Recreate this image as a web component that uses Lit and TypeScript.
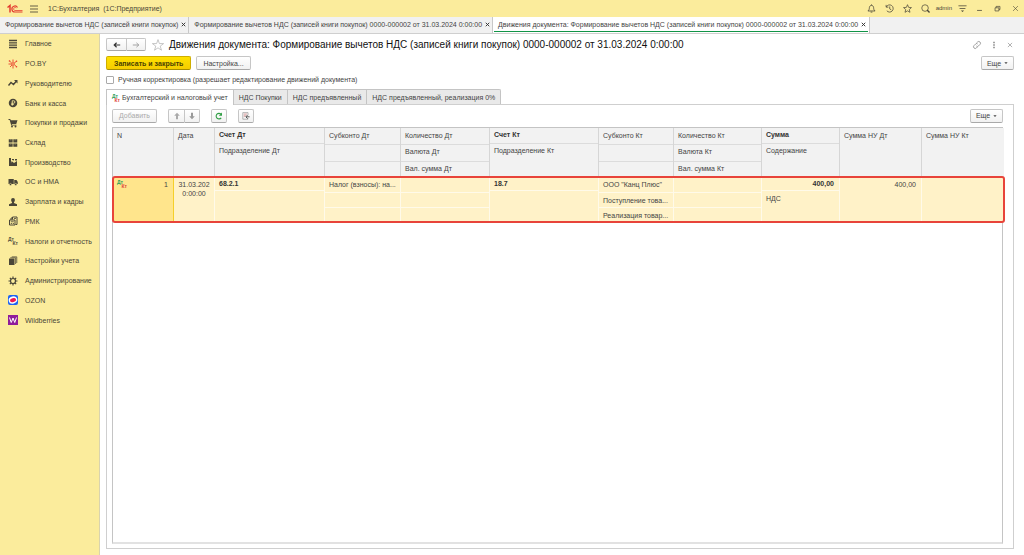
import { LitElement, html, css, svg, nothing, TemplateResult } from "lit";
import { customElement, property, state } from "lit/decorators.js";
import { classMap } from "lit/directives/class-map.js";

const icons: Record<string, TemplateResult> = {
  main: svg`<path d="M2 3h16M2 7.700h16M2 12.300h16M2 17h16" stroke="currentColor" stroke-width="2.600"/>`,
  poby: svg`<g stroke="#e8432e" stroke-width="1.8" fill="none"><circle cx="10" cy="10" r="2.5"/><path d="M10 7V1M10 13v6M12 8.500l5-4M12.500 11.500l5 4M7.500 10H1M7.500 8L3 4M8 12l-4 4"/></g><g fill="#e8432e"><circle cx="17" cy="4.500" r="1.600"/><circle cx="3" cy="4" r="1.600"/><circle cx="17" cy="15.500" r="1.600"/></g>`,
  chart: svg`<path d="M1 15l5-6 5 4 6-7" fill="none" stroke="currentColor" stroke-width="2.800"/><path d="M12 4h7v7z" fill="currentColor"/>`,
  bank: svg`<circle cx="10" cy="10" r="8.500" fill="currentColor"/><path d="M8.500 15.500V5.500h2.800a2.500 2.500 0 0 1 0 5H6.500M6.500 13h5" fill="none" stroke="#fbed9e" stroke-width="1.700"/>`,
  cart: svg`<path d="M1 2h3.500l1 2.500H19l-2.500 7.500H7.500l.5 1.500h9v1.500H6.500L3.300 3.800H1z" fill="currentColor"/><circle cx="8" cy="17" r="1.900" fill="currentColor"/><circle cx="15" cy="17" r="1.900" fill="currentColor"/>`,
  stock: svg`<path d="M1.500 2.500h7.800V9H1.500zM10.700 2.500h7.800V9h-7.800zM1.500 11h7.800v6.500H1.500zM10.700 11h7.800v6.500h-7.800z" fill="currentColor"/><path d="M4.500 2.500v2h2v-2M13.300 2.500v2h2v-2M4.500 11v2h2v-2M13.300 11v2h2v-2" fill="#a89f72"/>`,
  factory: svg`<path d="M2 18V8l5 3V8l5 4 6-4v10z" fill="currentColor"/><path d="M2 2h4v8H2zM8 4h4v3l-4-1zM14 4h4v3h-4z" fill="currentColor"/>`,
  truck: svg`<path d="M1 4h10.500v10H1zM12.500 6H17l2.500 4v4h-7z" fill="currentColor"/><circle cx="5" cy="15" r="2.200" fill="currentColor" stroke="#fbed9e"/><circle cx="15.500" cy="15" r="2.200" fill="currentColor" stroke="#fbed9e"/>`,
  person: svg`<path d="M10 2a3.800 3.800 0 0 1 3.800 4c0 2-.8 3.500-1.800 4.300V12l6 2.500V18H2v-3.500L8 12v-1.700C7 9.500 6.200 8 6.200 6A3.800 3.800 0 0 1 10 2z" fill="currentColor"/>`,
  rmk: svg`<path d="M9 7V2h9v15h-3M3 8h11v10H3zM6 8V4h3" fill="none" stroke="currentColor" stroke-width="2"/><path d="M5.500 11.500h6M5.500 15h2.500M9.500 15H12M12 5h4" stroke="currentColor" stroke-width="1.600"/>`,
  books: svg`<path d="M2 5h11v13H2z" fill="currentColor"/><path d="M4.500 3.500h10.700V16M7.500 1.700h10V14" fill="none" stroke="currentColor" stroke-width="1.500"/>`,
  gear: svg`<circle cx="10" cy="10" r="5" fill="none" stroke="currentColor" stroke-width="2.400"/><path d="M10 1v4M10 15v4M1 10h4M15 10h4M3.700 3.700l2.800 2.800M13.500 13.500l2.800 2.800M16.300 3.700l-2.800 2.800M6.500 13.500l-2.800 2.800" stroke="currentColor" stroke-width="2.400"/>`,
  ozon: svg`<rect width="20" height="20" rx="4" fill="#1d63f2"/><ellipse cx="10" cy="10" rx="8.700" ry="7" transform="rotate(-15 10 10)" fill="#fff"/><ellipse cx="10" cy="10.300" rx="6" ry="4" transform="rotate(-15 10 10)" fill="#f0164f"/>`,
  wb: svg`<rect width="20" height="20" fill="#8f1d9b"/><path d="M3 5l3.500 10L10 6l3.500 9L17 5" fill="none" stroke="#fff" stroke-width="2"/>`,
  menu: svg`<path d="M2 4h16M2 10h16M2 16h16" stroke="currentColor" stroke-width="1.700"/>`,
  bell: svg`<path d="M2 15.500c3-2.500 3-4 3.300-7.500C5.600 5 7.500 3 10 3s4.400 2 4.700 5c.3 3.500.3 5 3.300 7.500zM10 3V1M8 18h4" fill="none" stroke="currentColor" stroke-width="1.800"/>`,
  history: svg`<path d="M3 6.500A8 8 0 1 1 4 15M2.500 2v5h5M10.500 5.500V11l3.500 2" fill="none" stroke="currentColor" stroke-width="1.700"/>`,
  star: svg`<path d="M10 1.500l2.500 6 6.300.5-4.800 4.200 1.500 6.300L10 15.200l-5.500 3.300L6 12.200 1.200 8l6.300-.5z" fill="none" stroke="currentColor" stroke-width="1.600" stroke-linejoin="round"/>`,
  starThin: svg`<path d="M10 1l2.300 6.600 7 .1-5.600 4.200 2.100 6.800L10 14.700l-5.800 4 2.100-6.800L.700 7.700l7-.1z" fill="none" stroke="currentColor" stroke-width="1.100"/>`,
  search: svg`<circle cx="9" cy="9" r="7.300" fill="none" stroke="currentColor" stroke-width="1.600"/><path d="M13.500 13.500l5.500 5.500" stroke="currentColor" stroke-width="3"/>`,
  filter: svg`<path d="M1 4h18M3.500 10h13" stroke="currentColor" stroke-width="1.700"/><path d="M6.500 14.500h7L10 18z" fill="currentColor"/>`,
  minimize: svg`<path d="M3 15.500h14" stroke="currentColor" stroke-width="2.200"/>`,
  restore: svg`<path d="M3 8h11v9H3zM6 8V4h11v9h-3" fill="none" stroke="currentColor" stroke-width="2"/>`,
  close: svg`<path d="M3 3l14 14M17 3L3 17" stroke="currentColor" stroke-width="1.700"/>`,
  closeBold: svg`<path d="M3 3l14 14M17 3L3 17" stroke="currentColor" stroke-width="3.800"/>`,
  link: svg`<path d="M8.500 5.500l3-3a4 4 0 0 1 6 6l-4 4a3.500 3.500 0 0 1-5 0M11.500 14.500l-3 3a4 4 0 0 1-6-6l4-4a3.500 3.500 0 0 1 5 0" fill="none" stroke="currentColor" stroke-width="1.500"/>`,
  dots: svg`<path d="M10 2v3.500M10 8.300v3.500M10 14.500V18" stroke="currentColor" stroke-width="3"/>`,
  back: svg`<path d="M2 10h16M9 4.500L3 10l6 5.500" fill="none" stroke="currentColor" stroke-width="2.900"/>`,
  forward: svg`<path d="M2 10h15M11 4.500l6 5.500-6 5.500" fill="none" stroke="currentColor" stroke-width="2.200"/>`,
  up: svg`<path d="M10 2l7 7.500h-4.500V18h-5V9.500H3z" fill="currentColor"/>`,
  down: svg`<path d="M10 18l7-7.500h-4.500V2h-5v8.500H3z" fill="currentColor"/>`,
  refresh: svg`<path d="M15.500 14.500A7 7 0 1 1 15 5.500" fill="none" stroke="#2f9e44" stroke-width="2.800"/><path d="M17.500 1.500v8h-8z" fill="#2f9e44"/>`,
  report: svg`<path d="M2 1.500h13V8M2 1.500v16.500h13V16" fill="none" stroke="#888" stroke-width="1.500"/><path d="M4.500 5h8M4.500 8h6M4.500 11h3" stroke="#c77" stroke-width="1.500"/><path d="M19 12h-9M14 7.500L9.500 12l4.500 4.500" fill="none" stroke="#444" stroke-width="2.200"/>`,
  caret: svg`<path d="M2 6h16l-8 9z" fill="currentColor"/>`,
};

@customElement("ui-icon")
class UiIcon extends LitElement {
  static styles = css`
    :host { display: inline-flex; flex: none; width: 10px; height: 10px; }
    svg { width: 100%; height: 100%; overflow: visible; }
  `;
  @property() name = "";
  render() {
    return html`<svg viewBox="0 0 20 20" aria-hidden="true">${icons[this.name] ?? nothing}</svg>`;
  }
}

/* Two-letter debit/credit mark, set as small offset captions. */
@customElement("debit-credit")
class DebitCredit extends LitElement {
  static styles = css`
    :host { display: inline-flex; flex-direction: column; flex: none; width: 10px; font: bold 5px/4px "Liberation Sans", Arial, sans-serif; color: #2f9e5b; }
    :host([plain]) { color: #55503f; }
    .credit { align-self: flex-end; color: #e0463c; }
    :host([plain]) .credit { color: inherit; }
  `;
  render() {
    return html`<span>Дт</span><span class="credit">Кт</span>`;
  }
}

interface Part { text: string; bold?: boolean; right?: boolean }
interface Column { width: number; head: Part[]; body: Part[] }

const t = (text = "", bold = false, right = false): Part => ({ text, bold, right });

const columns: Column[] = [
  { width: 61, head: [t("N")], body: [t("1", false, true)] },
  { width: 41, head: [t("Дата")], body: [t("31.03.202 0:00:00")] },
  { width: 110, head: [t("Счет Дт", true), t("Подразделение Дт")], body: [t("68.2.1", true), t()] },
  { width: 76, head: [t("Субконто Дт"), t(), t()], body: [t("Налог (взносы): на..."), t(), t()] },
  { width: 89, head: [t("Количество Дт"), t("Валюта Дт"), t("Вал. сумма Дт")], body: [t(), t(), t()] },
  { width: 109, head: [t("Счет Кт", true), t("Подразделение Кт")], body: [t("18.7", true), t()] },
  { width: 75, head: [t("Субконто Кт"), t(), t()], body: [t('ООО "Канц Плюс"'), t("Поступление това..."), t("Реализация товар...")] },
  { width: 88, head: [t("Количество Кт"), t("Валюта Кт"), t("Вал. сумма Кт")], body: [t(), t(), t()] },
  { width: 78, head: [t("Сумма", true), t("Содержание")], body: [t("400,00", true, true), t("НДС")] },
  { width: 82, head: [t("Сумма НУ Дт")], body: [t("400,00", false, true)] },
  { width: 82, head: [t("Сумма НУ Кт")], body: [t()] },
];

@customElement("postings-table")
class PostingsTable extends LitElement {
  static styles = css`
    :host { display: block; flex: 1; border: 1px solid #c4c4c4; border-bottom: 2px solid #e2e2e2; background: #fff; }
    table { width: 100%; table-layout: fixed; border-collapse: separate; border-spacing: 0; font-size: 7px; line-height: 9px; color: #444; }
    th, td { padding: 0; vertical-align: top; text-align: left; font-weight: normal; }
    th { background: #f2f2f2; border-right: 1px solid #d6d6d6; }
    td { background: #fff2c8; border-right: 1px solid #fffae9; }
    th:last-child, td:last-child { border-right: 0; }
    .stack { display: grid; }
    thead .stack { height: 49px; }
    tbody .stack { height: 45px; }
    thead .two { grid-template-rows: 15px 1fr; }
    thead .three { grid-template-rows: 16px 17px 1fr; }
    tbody .two { grid-template-rows: 13px 1fr; }
    tbody .three { grid-template-rows: 15px 15px 1fr; }
    .part { padding: 3px 2px 0 4px; white-space: nowrap; box-sizing: border-box; }
    .right { text-align: right; padding-right: 5px; }
    thead .part + .part { border-top: 1px solid #dcdcdc; padding-top: 2px; }
    tbody .part + .part { border-top: 1px solid #fffae9; padding-top: 3px; }
    .bold { font-weight: bold; padding-top: 2px; color: #333; }
    .date { white-space: normal; text-align: center; padding: 3px 4px 0; }
    .number { background: #ffe58c; border-right-color: #f5cf2a; }
    .number .stack { display: flex; }
    .number debit-credit { padding: 3px 0 0 4px; }
    .number .part { flex: 1; }
    tbody tr { outline: 2px solid #e8443a; outline-offset: -1px; border-radius: 2px; }
  `;
  private parts(list: Part[], date: boolean) {
    return list.map(
      (p) => html`<div class=${classMap({ part: true, bold: !!p.bold, right: !!p.right, date })}>${p.text}</div>`,
    );
  }
  render() {
    const kind = ["", "one", "two", "three"];
    return html`
      <table>
        <colgroup>${columns.map((c) => html`<col width=${c.width} />`)}</colgroup>
        <thead>
          <tr>${columns.map((c) => html`<th scope="col"><div class="stack ${kind[c.head.length]}">${this.parts(c.head, false)}</div></th>`)}</tr>
        </thead>
        <tbody>
          <tr>
            ${columns.map(
              (c, i) => html`<td class=${i === 0 ? "number" : ""}>
                <div class="stack ${kind[c.body.length]}">
                  ${i === 0 ? html`<debit-credit></debit-credit>` : nothing}${this.parts(c.body, i === 1)}
                </div>
              </td>`,
            )}
          </tr>
        </tbody>
      </table>
    `;
  }
}

const sections: [string, string][] = [
  ["main", "Главное"],
  ["poby", "PO.BY"],
  ["chart", "Руководителю"],
  ["bank", "Банк и касса"],
  ["cart", "Покупки и продажи"],
  ["stock", "Склад"],
  ["factory", "Производство"],
  ["truck", "ОС и НМА"],
  ["person", "Зарплата и кадры"],
  ["rmk", "РМК"],
  ["dtkt", "Налоги и отчетность"],
  ["books", "Настройки учета"],
  ["gear", "Администрирование"],
  ["ozon", "OZON"],
  ["wb", "Wildberries"],
];

const documentName = "Формирование вычетов НДС (записей книги покупок)";
const title = `Движения документа: ${documentName} 0000-000002 от 31.03.2024 0:00:00`;
const windows = [documentName, `${documentName} 0000-000002 от 31.03.2024 0:00:00`, title];
const registers = ["Бухгалтерский и налоговый учет", "НДС Покупки", "НДС предъявленный", "НДС предъявленный, реализация 0%"];

@customElement("app-root")
class AppRoot extends LitElement {
  static styles = css`
    :host { display: flex; flex-direction: column; min-height: 100vh; background: #fff; color: #444; font: 7px/9px "Liberation Sans", Arial, sans-serif; }
    * { box-sizing: border-box; }
    button { font: inherit; color: inherit; margin: 0; padding: 0; border: 0; background: none; display: inline-flex; align-items: center; justify-content: center; white-space: nowrap; }
    a { color: inherit; text-decoration: none; }

    .topbar { display: flex; align-items: center; height: 17px; padding: 0 5px 0 7px; background: #fbec9c; color: #4a4638; }
    .logo { width: 16px; height: 10px; margin-right: 6px; }
    .product { margin-left: 9px; flex: 1; white-space: pre; }
    .tools { display: flex; align-items: center; gap: 9px; }
    .tools ui-icon { width: 9px; height: 9px; }
    .window { display: flex; gap: 11px; }
    .window ui-icon { width: 7px; height: 7px; }
    .user { font-size: 6px; margin: 0 -3px; }

    .windows { display: flex; height: 17px; background: #f1f1f1; border-bottom: 1px solid #cfcfcf; }
    .open { padding: 0 2px 0 5px; border-right: 1px solid #c8c8c8; white-space: nowrap; }
    .open ui-icon { width: 5px; height: 5px; color: #333; }
    .current { background: #fff; padding: 0 1px; }
    .current .inner { padding: 0 2px 0 4px; border-bottom: 1px solid #119447; }
    .inner { display: flex; align-items: center; gap: 3px; height: 15px; }

    .body { flex: 1; display: flex; }
    .sidebar { width: 100px; flex: none; background: #fbec9c; border-right: 1px solid #d9d3ae; color: #4a4638; }
    .sections { display: grid; grid-auto-rows: 1fr; height: 296px; margin: 0; padding: 0; list-style: none; }
    .section { display: flex; align-items: center; gap: 7px; height: 100%; padding-left: 8px; white-space: nowrap; }

    .page { flex: 1; min-width: 0; display: flex; flex-direction: column; padding: 3px 10px 6px 6px; }
    .heading { display: flex; align-items: center; height: 15px; }
    .travel, .pair { display: flex; }
    .travel button { width: 20px; height: 13px; }
    .travel ui-icon { width: 8px; height: 8px; }
    .travel button, .pair button, .button { border: 1px solid #c6c6c6; border-bottom-color: #a9a9a9; background: linear-gradient(#fff, #f1f1f1); border-radius: 2px; }
    .travel button:first-child, .pair button:first-child { border-radius: 2px 0 0 2px; border-right-width: 0; color: #333; }
    .travel button:last-child, .pair button:last-child { border-radius: 0 2px 2px 0; color: #999; }
    .favorite { margin: 0 5px 0 6px; color: #aaa; }
    .favorite ui-icon { width: 12px; height: 12px; }
    h1 { flex: 1; margin: 0; font-size: 10px; line-height: 13px; font-weight: normal; color: #111; white-space: nowrap; }
    .actions { display: flex; align-items: center; gap: 9px; padding-right: 1px; color: #666; }
    .actions ui-icon { width: 8px; height: 8px; }
    .actions .small { width: 6px; height: 6px; }

    .commands { display: flex; gap: 5px; margin-top: 4px; height: 14px; }
    .commands .button { height: 14px; padding: 0 6px; }
    .commands .primary { padding: 0 7px; border-color: #cfae00; border-bottom-color: #a78d00; background: linear-gradient(#ffe100, #f5cd00); font-weight: bold; color: #4a4200; }
    .commands .more, .toolbar .more { margin-left: auto; width: 33px; padding: 0; gap: 3px; }
    .more ui-icon, .toolbar .more ui-icon { width: 4px; height: 4px; }

    .manual { display: flex; align-items: center; gap: 4px; height: 9px; margin: 5px 0; }
    .manual input { appearance: none; width: 8px; height: 8px; margin: 0; border: 1px solid #aaa; border-radius: 1px; background: #fff; }
    .manual input:checked { background: #119447; }

    .registers { display: flex; height: 15px; }
    .register { height: 15px; padding: 0 5px; border: 1px solid #c4c4c4; border-width: 1px 1px 0 0; background: #e9e9e9; }
    .register:first-child { border-left-width: 1px; }
    .register:last-child { border-top-right-radius: 2px; }
    .register.selected { height: 16px; z-index: 1; background: #fff; }
    .register:first-child { gap: 2px; padding: 0 5px 0 3px; }
    .panel { flex: 1; display: flex; flex-direction: column; border: 1px solid #cfcfcf; padding: 3px 10px 4px 5px; }
    .toolbar { display: flex; align-items: center; height: 15px; gap: 11px; margin-bottom: 4px; }
    .toolbar .button { height: 14px; }
    .toolbar .add { width: 45px; color: #aaa; }
    .toolbar .square { width: 16px; }
    .toolbar ui-icon { width: 8px; height: 8px; }
    .pair button { width: 16px; height: 14px; }
    .pair button:first-child { color: #aaa; }
  `;

  @state() private selected = 0;

  render() {
    return html`
      <header class="topbar">
        <svg class="logo" viewBox="0 0 32 20" role="img" aria-label="1С">
          <path d="M1 7l5-4v14" fill="none" stroke="#e33b2e" stroke-width="3" />
          <path d="M21 7a6 6 0 1 0-5 9h15" fill="none" stroke="#e33b2e" stroke-width="2.400" />
          <path d="M18.500 8a3 3 0 1 0-2.500 5h15" fill="none" stroke="#e33b2e" stroke-width="1.500" />
        </svg>
        <button aria-label="Меню"><ui-icon name="menu"></ui-icon></button>
        <span class="product">1С:Бухгалтерия  (1С:Предприятие)</span>
        <div class="tools">
          <button aria-label="Уведомления"><ui-icon name="bell"></ui-icon></button>
          <button aria-label="История"><ui-icon name="history"></ui-icon></button>
          <button aria-label="Избранное"><ui-icon name="star"></ui-icon></button>
          <button aria-label="Поиск"><ui-icon name="search"></ui-icon></button>
          <button class="user">admin</button>
          <button aria-label="Настройки"><ui-icon name="filter"></ui-icon></button>
          <div class="window">
            <button aria-label="Свернуть"><ui-icon name="minimize"></ui-icon></button>
            <button aria-label="Восстановить"><ui-icon name="restore"></ui-icon></button>
            <button aria-label="Закрыть"><ui-icon name="close"></ui-icon></button>
          </div>
        </div>
      </header>
      <nav class="windows">
        ${windows.map(
          (name, i) => html`<div class=${classMap({ open: true, current: i === 2 })}>
            <div class="inner"><a href="#window-${i}">${name}</a><button aria-label="Закрыть вкладку"><ui-icon name="closeBold"></ui-icon></button></div>
          </div>`,
        )}
      </nav>
      <div class="body">
        <nav class="sidebar">
          <ul class="sections">
            ${sections.map(
              ([icon, name]) => html`<li><a class="section" href="#${icon}">
                ${icon === "dtkt" ? html`<debit-credit plain></debit-credit>` : html`<ui-icon name=${icon}></ui-icon>`}<span>${name}</span>
              </a></li>`,
            )}
          </ul>
        </nav>
        <main class="page">
          <div class="heading">
            <div class="travel">
              <button aria-label="Назад"><ui-icon name="back"></ui-icon></button>
              <button aria-label="Вперед"><ui-icon name="forward"></ui-icon></button>
            </div>
            <button class="favorite" aria-label="В избранное"><ui-icon name="starThin"></ui-icon></button>
            <h1>${title}</h1>
            <div class="actions">
              <button aria-label="Ссылка"><ui-icon name="link"></ui-icon></button>
              <button aria-label="Действия"><ui-icon name="dots"></ui-icon></button>
              <button aria-label="Закрыть"><ui-icon class="small" name="close"></ui-icon></button>
            </div>
          </div>
          <div class="commands">
            <button class="button primary">Записать и закрыть</button>
            <button class="button">Настройка...</button>
            <button class="button more">Еще<ui-icon name="caret"></ui-icon></button>
          </div>
          <label class="manual"><input type="checkbox" />Ручная корректировка (разрешает редактирование движений документа)</label>
          <div class="registers" role="tablist">
            ${registers.map(
              (name, i) => html`<button
                role="tab"
                aria-selected=${i === this.selected ? "true" : "false"}
                class=${classMap({ register: true, selected: i === this.selected })}
                @click=${() => (this.selected = i)}
              >${i === 0 ? html`<debit-credit></debit-credit>` : nothing}${name}</button>`,
            )}
          </div>
          <section class="panel">
            <div class="toolbar">
              <button class="button add" disabled>Добавить</button>
              <div class="pair">
                <button aria-label="Вверх"><ui-icon name="up"></ui-icon></button>
                <button aria-label="Вниз"><ui-icon name="down"></ui-icon></button>
              </div>
              <button class="button square" aria-label="Обновить"><ui-icon name="refresh"></ui-icon></button>
              <button class="button square" aria-label="Отчет"><ui-icon name="report"></ui-icon></button>
              <button class="button more">Еще<ui-icon name="caret"></ui-icon></button>
            </div>
            <postings-table></postings-table>
          </section>
        </main>
      </div>
    `;
  }
}
